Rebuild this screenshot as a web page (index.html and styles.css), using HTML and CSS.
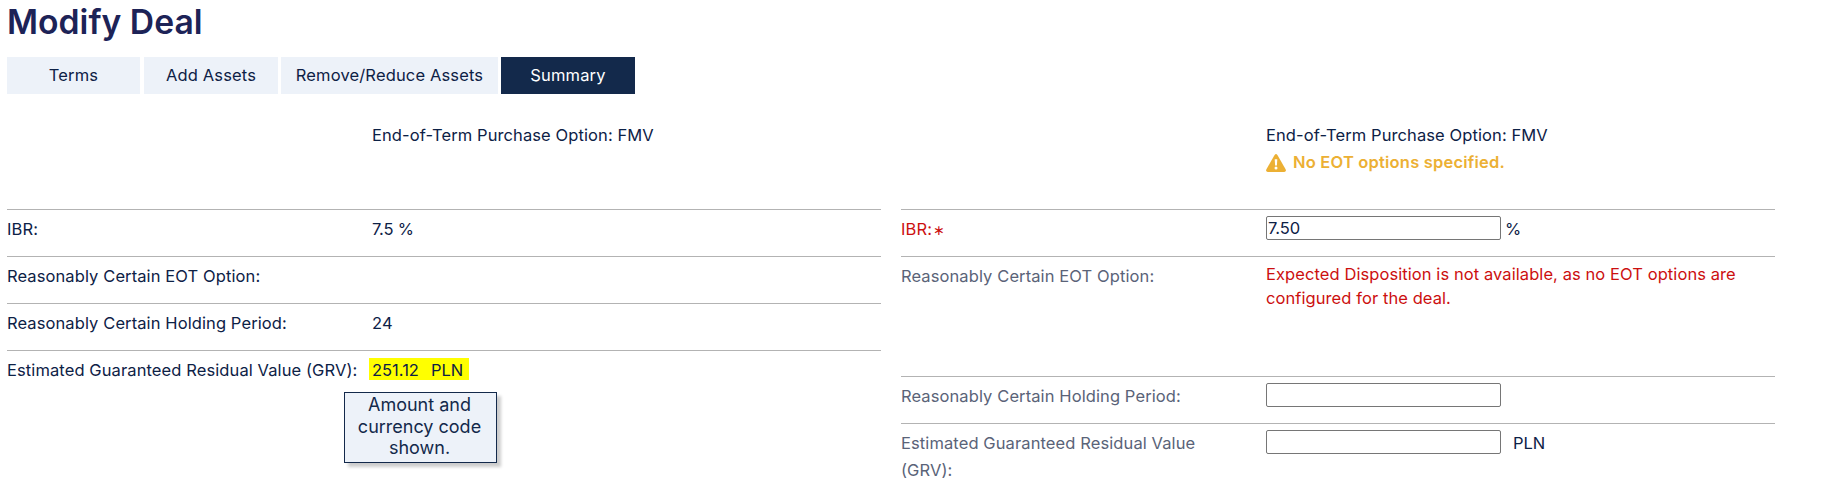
FILE: index.html
```html
<!DOCTYPE html>
<html lang="en">
<head>
<meta charset="utf-8">
<title>Modify Deal</title>
<link rel="stylesheet" href="styles.css">
</head>
<body>
<h1 class="title">Modify Deal</h1>
<nav class="tabs">
  <a class="tab tab-terms">Terms</a>
  <a class="tab tab-add">Add Assets</a>
  <a class="tab tab-remove">Remove/Reduce Assets</a>
  <a class="tab tab-active">Summary</a>
</nav>
<main class="columns">
  <section class="column">
    <div class="intro"><div>End-of-Term Purchase Option: FMV</div></div>
    <div class="row"><div class="label">IBR:</div><div class="value number">7.5 %</div></div>
    <div class="row"><div class="label">Reasonably Certain EOT Option:</div></div>
    <div class="row"><div class="label">Reasonably Certain Holding Period:</div><div class="value">24</div></div>
    <div class="row">
      <div class="label">Estimated Guaranteed Residual Value (GRV):</div>
      <div class="value anchor"><span class="highlight"><span>251.12</span><span>PLN</span></span>
        <div class="callout">Amount and<br>currency code<br>shown.</div>
      </div>
    </div>
  </section>
  <section class="column editable">
    <div class="intro">
      <div>End-of-Term Purchase Option: FMV</div>
      <div class="warning">
        <svg class="warning-icon" viewBox="0 0 20 18"><path fill="#ecb034" d="M8.600 1Q10-.9 11.400 1L19.600 15.300Q20.500 17.700 18.200 18H1.800Q-.5 17.700.4 15.300Z"/><path fill="#fff" d="M8.700 5.200h2.600l-.4 6.300H9.100z"/><circle cx="10" cy="14" r="1.500" fill="#fff"/></svg>
        <span>No EOT options specified.</span>
      </div>
    </div>
    <div class="row"><label class="label required" for="ibr">IBR:<span class="asterisk">∗</span></label><div class="value"><input class="field" id="ibr" value="7.50"><span class="unit">%</span></div></div>
    <div class="row tall"><div class="label">Reasonably Certain EOT Option:</div><div class="value error">Expected Disposition is not available, as no EOT options are configured for the deal.</div></div>
    <div class="row"><label class="label" for="period">Reasonably Certain Holding Period:</label><div class="value"><input class="field" id="period"></div></div>
    <div class="row"><label class="label" for="grv">Estimated Guaranteed Residual Value (GRV):</label><div class="value"><input class="field" id="grv"><span class="unit currency">PLN</span></div></div>
  </section>
</main>
</body>
</html>
```
FILE: styles.css
```css
* { box-sizing: border-box; }
body {
  margin: 0;
  padding: 2px 0 0 7px;
  background: #fff;
  color: #0d2146;
  font: 16.5px/27px Inter, "Liberation Sans", sans-serif;
  letter-spacing: .1px;
  overflow: hidden;
}
.title {
  margin: 0 0 15px;
  color: #1d2357;
  font-size: 33.7px;
  font-weight: 600;
  line-height: 40px;
  letter-spacing: 0;
}
.tabs { display: flex; gap: 3px; height: 37px; letter-spacing: .15px; }
.tab {
  width: 134px;
  line-height: 37px;
  text-align: center;
  background: #edf2f9;
}
.tab-terms { width: 133px; margin-right: 1px; }
.tab-remove { width: 217px; }
.tab-active { background: #13294b; color: #fff; }
.columns {
  display: grid;
  grid-template-columns: 874px 874px;
  gap: 20px;
  align-items: start;
  padding-top: 28px;
}
.intro { height: 87px; padding-left: 365px; }
.warning {
  display: flex;
  align-items: center;
  gap: 7px;
  color: #ecb034;
  font-weight: 600;
  letter-spacing: .2px;
}
.warning-icon { width: 20px; height: 18px; }
.row {
  display: flex;
  min-height: 47px;
  padding-top: 6px;
  border-top: 1px solid #b3b3b3;
}
.tall { height: 120px; }
.label { flex: 0 0 365px; white-space: nowrap; }
.editable .label { padding-right: 30px; color: #5a6378; white-space: normal; }
.editable .required { color: #cc0f0f; }
.asterisk { margin-left: 1px; font-size: 14px; }
.value { display: flex; align-items: flex-start; }
.number { letter-spacing: -.2px; }
.editable .error {
  width: 490px;
  margin-top: -1px;
  color: #cc0f0f;
  line-height: 24px;
  letter-spacing: .08px;
}
.field {
  width: 235px;
  height: 24px;
  padding: 0 1px;
  border: 1px solid #767676;
  border-radius: 2px;
  background: #fff;
  color: #0d2146;
  font: inherit;
  line-height: 20px;
}
.unit { margin-left: 4px; letter-spacing: -.2px; }
.currency { margin-left: 12px; letter-spacing: 0; }
.anchor { position: relative; }
.highlight {
  display: flex;
  gap: 12px;
  width: 100px;
  height: 22px;
  margin: 1px 0 0 -3px;
  padding: 0 3px;
  background: #ff0;
  line-height: 25px;
  letter-spacing: 0;
}
.callout {
  position: absolute;
  top: 35px;
  left: -28px;
  width: 153px;
  height: 71px;
  padding: 1px 2px 0 0;
  border: 1px solid #13294b;
  background: #edf2f9;
  box-shadow: 4px 4px 3px rgba(0, 0, 0, .2);
  color: #13294b;
  font-size: 18px;
  line-height: 21.7px;
  letter-spacing: 0;
  text-align: center;
}
```
